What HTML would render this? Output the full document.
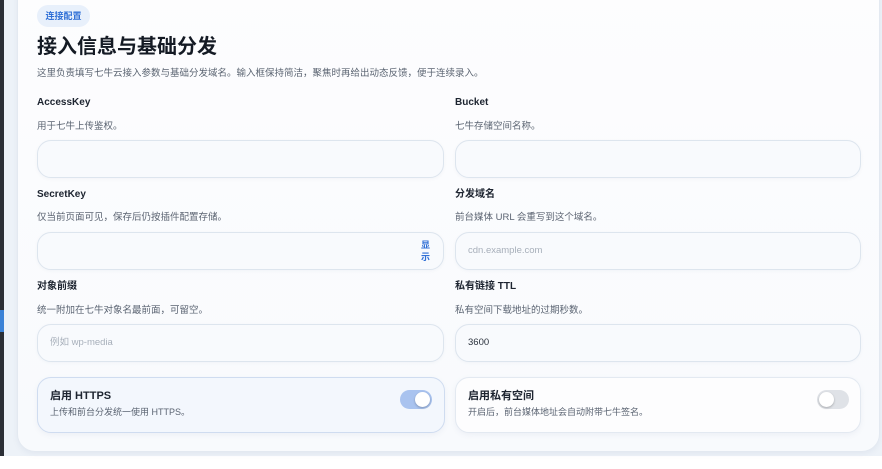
<!DOCTYPE html>
<html><head><meta charset="utf-8"><style>
*{box-sizing:border-box;margin:0;padding:0}
body{width:882px;height:469px;overflow:hidden;background:#fff;font-family:"Liberation Sans","Noto Sans CJK SC",sans-serif;position:relative}
.dark{position:absolute;left:0;top:0;width:4px;height:456px;background:#2b2f36}
.notch{position:absolute;left:0;top:310px;width:4px;height:22px;background:#3b82d6}
.bg{position:absolute;left:4px;top:0;width:878px;height:456px;background:#edf2f8}
.card{position:absolute;left:17px;top:-20px;width:863px;height:472px;background:linear-gradient(180deg,#fdfdfe,#f8fafd);border:1px solid #e3e9f1;border-radius:18px;box-shadow:0 2px 6px rgba(100,120,150,.08)}
.badge{position:absolute;left:37px;top:5px;width:53px;height:22px;border-radius:11px;background:#e8f0fb;color:#2f6fd6;font-size:9px;font-weight:bold;line-height:22px;text-align:center}
h1{position:absolute;left:37px;top:34px;font-size:20px;line-height:26px;font-weight:bold;color:#141a24}
.desc{position:absolute;left:37px;top:67px;font-size:9.5px;line-height:14px;color:#5b6472}
.lbl{position:absolute;font-size:10px;line-height:14px;font-weight:bold;color:#1d2430}
.hint{position:absolute;font-size:9.5px;line-height:14px;color:#5b6472}
.inp{position:absolute;height:38px;border:1px solid #dde5ee;border-radius:14px;background:#f8fafd;box-shadow:0 1px 3px rgba(100,120,150,.06);font-size:9.5px;line-height:36px;padding-left:12px;color:#9aa3af}
.tg{position:absolute;height:56px;border-radius:14px;border:1px solid #e3e9f1;background:#fdfdfe;box-shadow:0 2px 6px rgba(100,120,150,.08)}
.tg b{position:absolute;left:12px;top:11px;font-size:11px;line-height:14px;color:#1d2430}
.tg span{position:absolute;left:12px;top:27px;font-size:9px;line-height:14px;color:#5b6472}
.sw{position:absolute;top:12px;width:32px;height:19px;border-radius:10px}
.sw i{position:absolute;top:2px;width:15px;height:15px;border-radius:50%;background:#fff;box-shadow:0 1px 2px rgba(0,0,0,.25)}
</style></head><body>
<div class="bg"></div><div class="dark"></div><div class="notch"></div>
<div class="card"></div>
<div class="badge">连接配置</div>
<h1>接入信息与基础分发</h1>
<div class="desc">这里负责填写七牛云接入参数与基础分发域名。输入框保持简洁，聚焦时再给出动态反馈，便于连续录入。</div>

<div class="lbl" style="left:37px;top:96px">AccessKey</div>
<div class="hint" style="left:37px;top:120px">用于七牛上传鉴权。</div>
<div class="inp" style="left:37px;top:140px;width:407px"></div>
<div class="lbl" style="left:455px;top:96px">Bucket</div>
<div class="hint" style="left:455px;top:120px">七牛存储空间名称。</div>
<div class="inp" style="left:455px;top:140px;width:406px"></div>

<div class="lbl" style="left:37px;top:188px">SecretKey</div>
<div class="hint" style="left:37px;top:211px">仅当前页面可见，保存后仍按插件配置存储。</div>
<div class="inp" style="left:37px;top:232px;width:407px"><div style="position:absolute;right:12px;top:6px;width:10px;font-size:9px;line-height:12px;color:#2f6fd6;font-weight:bold">显示</div></div>
<div class="lbl" style="left:455px;top:188px">分发域名</div>
<div class="hint" style="left:455px;top:211px">前台媒体 URL 会重写到这个域名。</div>
<div class="inp" style="left:455px;top:232px;width:406px;color:#a7afba">cdn.example.com</div>

<div class="lbl" style="left:37px;top:280px">对象前缀</div>
<div class="hint" style="left:37px;top:304px">统一附加在七牛对象名最前面，可留空。</div>
<div class="inp" style="left:37px;top:324px;width:407px;color:#a7afba">例如 wp-media</div>
<div class="lbl" style="left:455px;top:280px">私有链接 TTL</div>
<div class="hint" style="left:455px;top:304px">私有空间下载地址的过期秒数。</div>
<div class="inp" style="left:455px;top:324px;width:406px;color:#2a313c">3600</div>

<div class="tg" style="left:37px;top:377px;width:408px;background:#f3f7fd;border-color:#cfdcf0"><b>启用 HTTPS</b><span>上传和前台分发统一使用 HTTPS。</span><div class="sw" style="left:362px;background:#a9c3ef"><i style="right:2px"></i></div></div>
<div class="tg" style="left:455px;top:377px;width:406px"><b>启用私有空间</b><span>开启后，前台媒体地址会自动附带七牛签名。</span><div class="sw" style="left:361px;background:#dfe2e7"><i style="left:2px"></i></div></div>
</body></html>
